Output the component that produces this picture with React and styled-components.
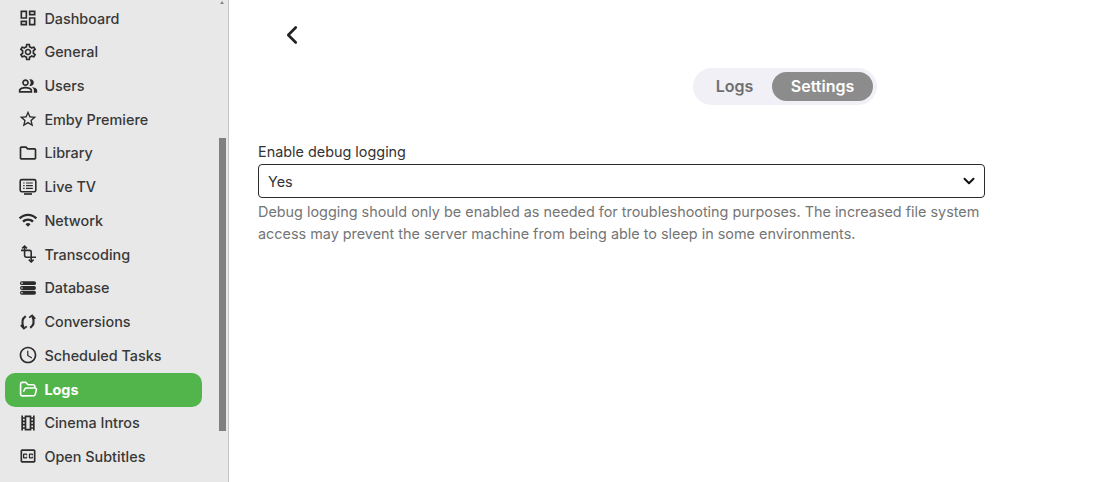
import React from 'react';
import styled, { createGlobalStyle, css } from 'styled-components';
import { ChevronLeft, ChevronDown, FolderOpen } from 'lucide-react';
import {
    MdOutlineDashboard,
    MdOutlineSettings,
    MdOutlinePeopleAlt,
    MdOutlineStarBorder,
    MdOutlineFolder,
    MdWifi,
    MdOutlineSchedule,
    MdOutlineTheaters,
    MdOutlineClosedCaption,
} from 'react-icons/md';

const GlobalStyle = createGlobalStyle`
    html, body {
        margin: 0;
        height: 100%;
        overflow: hidden;
        background: #fff;
    }
    body {
        font-family: Inter, "Noto Sans", sans-serif;
        color: #222;
    }
`;

const Page = styled.div`
    display: flex;
    height: 482px;
    width: 1109px;
`;

const Sidebar = styled.nav`
    position: relative;
    box-sizing: border-box;
    width: 229px;
    height: 482px;
    flex: none;
    overflow: hidden;
    background: #e8e8e8;
    border-right: 1px solid #c4c4c4;
    padding: 1.255px 0 0 5px;
`;

const NavItem = styled.a`
    position: relative;
    isolation: isolate;
    display: flex;
    align-items: center;
    box-sizing: border-box;
    width: 197px;
    height: 33.73px;
    padding-left: 14px;
    gap: 7.4px;
    font-size: 14.4px;
    font-weight: ${(p) => (p.$active ? 700 : 500)};
    color: ${(p) => (p.$active ? '#fff' : '#383838')};
    white-space: nowrap;
    ${(p) =>
        p.$active &&
        css`
            &::before {
                content: '';
                position: absolute;
                z-index: -1;
                left: 0;
                right: 0;
                top: 0.7px;
                height: 34px;
                border-radius: 10px;
                background: #52b54b;
            }
        `}
`;

const IconSlot = styled.span`
    display: flex;
    align-items: center;
    justify-content: center;
    width: 18px;
    height: 18px;
    font-size: 20px;
    flex: none;
    color: ${(p) => (p.$active ? '#fff' : '#2b2b2b')};
    & > svg {
        flex: none;
    }
`;

const ScrollThumb = styled.div`
    position: absolute;
    left: 219px;
    top: 138px;
    width: 7px;
    height: 293px;
    background: #808080;
`;

const ScrollArrow = styled.div`
    position: absolute;
    left: 220px;
    top: 1px;
    width: 0;
    height: 0;
    border-left: 2.5px solid transparent;
    border-right: 2.5px solid transparent;
    border-bottom: 3px solid #888;
`;

const Main = styled.main`
    flex: 1;
    box-sizing: border-box;
    padding: 20px 0 0 29px;
    display: flex;
    flex-direction: column;
`;

const BackButton = styled.button`
    display: flex;
    width: 30px;
    height: 30px;
    margin-left: 19px;
    padding: 0;
    align-items: center;
    justify-content: center;
    background: none;
    border: 0;
    color: #222;
`;

const TabBar = styled.div`
    align-self: flex-start;
    display: flex;
    align-items: center;
    box-sizing: border-box;
    margin: 18px 0 0 435px;
    width: 184px;
    height: 37px;
    padding: 0 3px 0 4px;
    border-radius: 19px;
    background: #f1f0f6;
`;

const Tab = styled.button`
    height: 29px;
    border: 0;
    border-radius: 15px;
    padding: 0 0 2px;
    width: ${(p) => (p.$active ? '101px' : '75px')};
    font-family: inherit;
    font-size: 16px;
    font-weight: 600;
    color: ${(p) => (p.$active ? '#fff' : '#6f6f6f')};
    background: ${(p) => (p.$active ? '#8c8c8c' : 'transparent')};
`;

const Field = styled.div`
    margin-top: 38px;
    width: 727px;
`;

const FieldLabel = styled.label`
    display: block;
    font-size: 14.4px;
    line-height: 18px;
    color: #333;
`;

const SelectBox = styled.div`
    display: flex;
    align-items: center;
    justify-content: space-between;
    box-sizing: border-box;
    height: 34px;
    margin-top: 3px;
    padding: 0 9px;
    border: 1px solid #2b2b2b;
    border-radius: 4px;
    font-size: 14.4px;
    color: #333;
`;

const FieldHint = styled.p`
    margin: 3px 0 0;
    font-size: 14.4px;
    line-height: 22px;
    color: #757575;
`;

const SelectChevron = styled(ChevronDown)`
    margin-right: -3px;
    color: #111;
`;

const DatabaseIcon = () => (
    <svg width="18" height="18" viewBox="0 0 18 18" fill="currentColor">
        <rect x="1" y="2.2" width="16" height="3.9" rx="1.9" />
        <rect x="1" y="7" width="16" height="3.9" rx="1.9" />
        <rect x="1" y="11.8" width="16" height="3.9" rx="1.9" />
        <circle cx="3" cy="4.15" r="0.8" fill="#e8e8e8" />
        <circle cx="3" cy="8.95" r="0.8" fill="#e8e8e8" />
        <circle cx="3" cy="13.75" r="0.8" fill="#e8e8e8" />
    </svg>
);

const ConversionsIcon = () => (
    <svg width="18" height="18" viewBox="0 0 18 18" fill="none" stroke="currentColor" strokeWidth="2.1">
        <path d="M6.8 3.2 C3.4 5.4 2.6 9.8 4.6 14.6" />
        <path d="M1.8 12.2 L4.9 15.6 L7.8 13.4" strokeWidth="1.8" />
        <path d="M11.2 14.8 C14.6 12.6 15.4 8.2 13.4 3.4" />
        <path d="M16.2 5.8 L13.1 2.4 L10.2 4.6" strokeWidth="1.8" />
    </svg>
);

const TranscodingIcon = () => (
    <svg width="18" height="18" viewBox="0 0 18 18" fill="none" stroke="currentColor" strokeWidth="1.6">
        <path d="M5.6 2 V10.6 Q5.6 12.2 7.2 12.2 H17" />
        <path d="M2 5.4 H10.6 Q12.2 5.4 12.2 7 V16" />
        <path d="M3.2 3.4 L5.6 1.1 L8 3.4" strokeWidth="1.5" />
        <path d="M9.8 14.6 L12.2 17 L14.6 14.6" strokeWidth="1.5" />
    </svg>
);

const LiveTvIcon = () => (
    <svg width="18" height="18" viewBox="0 0 18 18" fill="none" stroke="currentColor" strokeWidth="1.6">
        <rect x="1.2" y="1.6" width="15.6" height="12.2" rx="1.6" />
        <path d="M5 16 H13" strokeWidth="1.7" />
        <path d="M4.2 5 H5.6 M7 5 H13.8 M4.2 7.7 H5.6 M7 7.7 H13.8 M4.2 10.4 H5.6 M7 10.4 H13.8" strokeWidth="1.2" />
    </svg>
);

const NAV = [
    { label: 'Dashboard', icon: <MdOutlineDashboard /> },
    { label: 'General', icon: <MdOutlineSettings /> },
    { label: 'Users', icon: <MdOutlinePeopleAlt /> },
    { label: 'Emby Premiere', icon: <MdOutlineStarBorder /> },
    { label: 'Library', icon: <MdOutlineFolder /> },
    { label: 'Live TV', icon: <LiveTvIcon /> },
    { label: 'Network', icon: <MdWifi /> },
    { label: 'Transcoding', icon: <TranscodingIcon /> },
    { label: 'Database', icon: <DatabaseIcon /> },
    { label: 'Conversions', icon: <ConversionsIcon /> },
    { label: 'Scheduled Tasks', icon: <MdOutlineSchedule /> },
    { label: 'Logs', icon: <FolderOpen size={19} strokeWidth={2} />, active: true },
    { label: 'Cinema Intros', icon: <MdOutlineTheaters /> },
    { label: 'Open Subtitles', icon: <MdOutlineClosedCaption /> },
];

export default function App() {
    return (
        <Page>
            <GlobalStyle />
            <Sidebar>
                {NAV.map((item) => (
                    <NavItem key={item.label} $active={item.active}>
                        <IconSlot $active={item.active}>{item.icon}</IconSlot>
                        {item.label}
                    </NavItem>
                ))}
                <ScrollArrow />
                <ScrollThumb />
            </Sidebar>
            <Main>
                <BackButton>
                    <ChevronLeft size={30} strokeWidth={2.1} />
                </BackButton>
                <TabBar>
                    <Tab>Logs</Tab>
                    <Tab $active>Settings</Tab>
                </TabBar>
                <Field>
                    <FieldLabel>Enable debug logging</FieldLabel>
                    <SelectBox>
                        Yes
                        <SelectChevron size={18} strokeWidth={2.6} />
                    </SelectBox>
                    <FieldHint>
                        Debug logging should only be enabled as needed for troubleshooting purposes. The increased file system access may prevent the server machine from being able to sleep in some environments.
                    </FieldHint>
                </Field>
            </Main>
        </Page>
    );
}
